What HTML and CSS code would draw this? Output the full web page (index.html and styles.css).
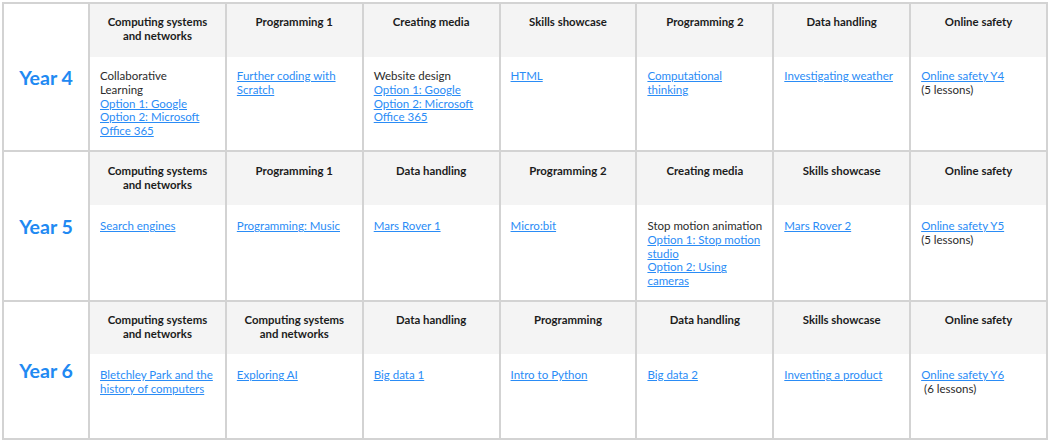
FILE: index.html
```html
<!DOCTYPE html>
<html lang="en">
<head>
<meta charset="utf-8">
<title>Computing curriculum – Years 4 to 6</title>
<link rel="stylesheet" href="styles.css">
</head>
<body>
<div class="curriculum">
  <section class="year-block y4">
    <div class="year">Year 4</div>
    <div class="unit-head">Computing systems and networks</div>
    <div class="unit-head">Programming 1</div>
    <div class="unit-head">Creating media</div>
    <div class="unit-head">Skills showcase</div>
    <div class="unit-head">Programming 2</div>
    <div class="unit-head">Data handling</div>
    <div class="unit-head">Online safety</div>
    <div class="unit-body">Collaborative<br>Learning<br><a href="#">Option 1: Google</a><br><a href="#">Option 2: Microsoft Office 365</a></div>
    <div class="unit-body"><a href="#">Further coding with Scratch</a></div>
    <div class="unit-body">Website design<br><a href="#">Option 1: Google</a><br><a href="#">Option 2: Microsoft Office 365</a></div>
    <div class="unit-body"><a href="#">HTML</a></div>
    <div class="unit-body"><a href="#">Computational thinking</a></div>
    <div class="unit-body"><a href="#">Investigating weather</a></div>
    <div class="unit-body"><a href="#">Online safety Y4</a><br>(5 lessons)</div>
  </section>
  <section class="year-block y5">
    <div class="year">Year 5</div>
    <div class="unit-head">Computing systems and networks</div>
    <div class="unit-head">Programming 1</div>
    <div class="unit-head">Data handling</div>
    <div class="unit-head">Programming 2</div>
    <div class="unit-head">Creating media</div>
    <div class="unit-head">Skills showcase</div>
    <div class="unit-head">Online safety</div>
    <div class="unit-body"><a href="#">Search engines</a></div>
    <div class="unit-body"><a href="#">Programming: Music</a></div>
    <div class="unit-body"><a href="#">Mars Rover 1</a></div>
    <div class="unit-body"><a href="#">Micro:bit</a></div>
    <div class="unit-body">Stop motion animation<br><a href="#">Option 1: Stop motion studio</a><br><a href="#">Option 2: Using cameras</a></div>
    <div class="unit-body"><a href="#">Mars Rover 2</a></div>
    <div class="unit-body"><a href="#">Online safety Y5</a><br>(5 lessons)</div>
  </section>
  <section class="year-block y6">
    <div class="year">Year 6</div>
    <div class="unit-head">Computing systems and networks</div>
    <div class="unit-head">Computing systems and networks</div>
    <div class="unit-head">Data handling</div>
    <div class="unit-head">Programming</div>
    <div class="unit-head">Data handling</div>
    <div class="unit-head">Skills showcase</div>
    <div class="unit-head">Online safety</div>
    <div class="unit-body"><a href="#">Bletchley Park and the history of computers</a></div>
    <div class="unit-body"><a href="#">Exploring AI</a></div>
    <div class="unit-body"><a href="#">Big data 1</a></div>
    <div class="unit-body"><a href="#">Intro to Python</a></div>
    <div class="unit-body"><a href="#">Big data 2</a></div>
    <div class="unit-body"><a href="#">Inventing a product</a></div>
    <div class="unit-body"><a href="#">Online safety Y6</a><br>&nbsp;(6 lessons)</div>
  </section>
</div>
</body>
</html>
```

FILE: styles.css
```css
* {
  box-sizing: border-box;
}

body {
  margin: 0;
  background: #ffffff;
  font-family: Lato, "Liberation Sans", sans-serif;
}

.curriculum {
  width: 1046px;
  margin: 2px 0 0 2px;
  padding: 2px;
  background: #d3d3d3;
  display: flex;
  flex-direction: column;
  gap: 2px;
}

.year-block {
  display: grid;
  grid-template-columns: 84px repeat(7, 1fr);
  column-gap: 2px;
}

.y4 {
  grid-template-rows: 53px 93px;
}

.y5 {
  grid-template-rows: 53px 95px;
}

.y6 {
  grid-template-rows: 52px 84px;
}

.year {
  grid-column: 1;
  grid-row: 1 / span 2;
  background: #ffffff;
  display: flex;
  align-items: center;
  justify-content: center;
  color: #2189f2;
  font-weight: 700;
  font-size: 19.5px;
}

.unit-head {
  background: #f4f4f4;
  padding: 11px 10px 0;
  text-align: center;
  font-weight: 700;
  font-size: 11.4px;
  line-height: 14px;
  color: #1c1c1c;
}

.y5 .unit-head {
  padding-top: 12px;
}

.unit-body {
  background: #ffffff;
  padding: 12px 8px 0 10px;
  font-size: 11.5px;
  line-height: 13.75px;
  color: #2b2b2b;
}

.y5 .unit-body,
.y6 .unit-body {
  padding-top: 14px;
}

.unit-body a {
  color: #2a8cf6;
  text-decoration: underline;
}
```
